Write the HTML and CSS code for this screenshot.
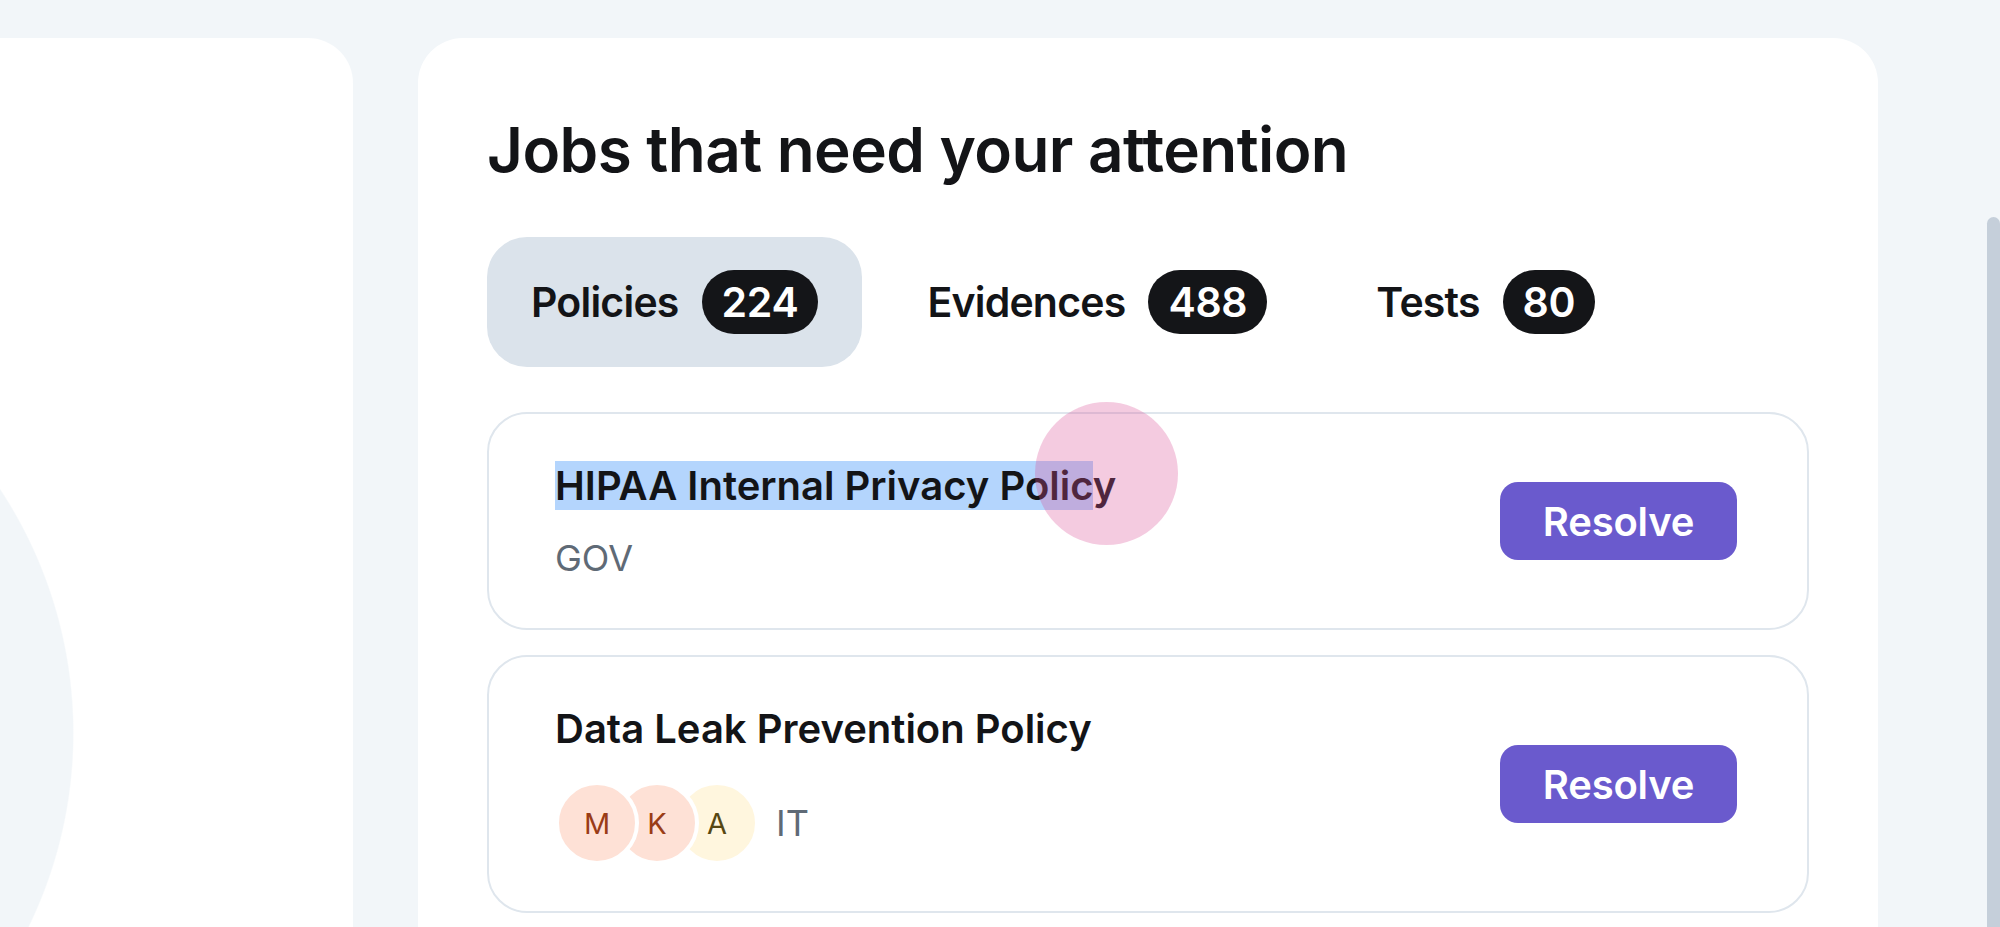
FILE: index.html
```html
<!DOCTYPE html>
<html lang="en">
<head>
<meta charset="utf-8">
<title>Jobs that need your attention</title>
<link rel="stylesheet" href="styles.css">
</head>
<body>
<div class="page">
  <aside class="side-card"></aside>
  <main class="main-card">
    <h1 class="title">Jobs that need your attention</h1>
    <nav class="tabs">
      <div class="tab active"><span class="tab-label">Policies</span><span class="badge">224</span></div>
      <div class="tab"><span class="tab-label">Evidences</span><span class="badge">488</span></div>
      <div class="tab"><span class="tab-label">Tests</span><span class="badge">80</span></div>
    </nav>
    <section class="jobs">
      <article class="job">
        <div class="job-info">
          <div class="job-title"><span class="selected">HIPAA Internal Privacy Polic</span>y</div>
          <div class="meta"><span class="dept">GOV</span></div>
        </div>
        <button class="resolve">Resolve</button>
        <span class="cursor-dot"></span>
      </article>
      <article class="job">
        <div class="job-info">
          <div class="job-title">Data Leak Prevention Policy</div>
          <div class="meta with-avatars">
            <div class="avatars">
              <span class="avatar peach z3">M</span>
              <span class="avatar peach z2">K</span>
              <span class="avatar cream z1">A</span>
            </div>
            <span class="dept">IT</span>
          </div>
        </div>
        <button class="resolve">Resolve</button>
      </article>
    </section>
  </main>
  <div class="scroll-thumb"></div>
</div>
</body>
</html>
```

FILE: styles.css
```css
* { box-sizing: border-box; }

html, body {
  margin: 0;
  padding: 0;
  height: 927px;
  overflow: hidden;
  background: #f2f6f9;
  font-family: Inter, "Noto Sans", sans-serif;
  color: #131417;
}

.page {
  display: flex;
  align-items: flex-start;
  height: 927px;
  padding-top: 38px;
  overflow: hidden;
}

.side-card {
  flex: none;
  width: 453px;
  height: 1000px;
  margin-left: -100px;
  border-radius: 45px;
  background: radial-gradient(circle 443px at -269px 695px, #f2f6f9 99.7%, #ffffff 100%);
}

.main-card {
  flex: none;
  width: 1460px;
  height: 1000px;
  margin-left: 65px;
  padding: 74px 69px 0;
  border-radius: 45px;
  background: #ffffff;
}

.title {
  margin: 0;
  font-size: 62px;
  line-height: 76px;
  font-weight: 600;
  letter-spacing: -0.55px;
}

.tabs {
  display: flex;
  gap: 21px;
  margin-top: 49px;
}

.tab {
  display: flex;
  align-items: center;
  gap: 23px;
  height: 130px;
  padding: 0 44px 0 44px;
  border-radius: 40px;
}

.tab.active { background: #dbe3eb; }

.tab-label {
  font-size: 41px;
  font-weight: 600;
  letter-spacing: -0.8px;
}

.badge {
  display: inline-flex;
  align-items: center;
  justify-content: center;
  height: 64px;
  padding: 0 20px;
  border-radius: 32px;
  background: #141518;
  color: #ffffff;
  font-size: 41px;
  font-weight: 600;
  letter-spacing: -0.3px;
}

.jobs {
  display: flex;
  flex-direction: column;
  gap: 25px;
  margin-top: 45px;
}

.job {
  position: relative;
  display: flex;
  align-items: center;
  justify-content: space-between;
  padding: 43px 70px 43px 66px;
  border: 2px solid #dfe6ed;
  border-radius: 40px;
}

.job-title {
  font-size: 40px;
  line-height: 57px;
  font-weight: 600;
  letter-spacing: 0;
}

.selected { background: #b4d5fd; }

.meta {
  display: flex;
  align-items: center;
  margin-top: 17px;
}

.meta.with-avatars { margin-top: 24px; margin-bottom: 3px; }

.dept {
  font-size: 36px;
  line-height: 54px;
  font-weight: 400;
  color: #5f6a76;
}

.avatars {
  display: flex;
  margin-right: 17px;
}

.avatar {
  position: relative;
  display: flex;
  align-items: center;
  justify-content: center;
  width: 84px;
  height: 84px;
  border: 4px solid #ffffff;
  border-radius: 50%;
  font-size: 29px;
  font-weight: 400;
}

.avatar + .avatar { margin-left: -24px; }

.avatar.peach { background: #fee1d6; color: #9a3c17; }
.avatar.cream { background: #fff6de; color: #574812; }

.z3 { z-index: 3; }
.z2 { z-index: 2; }
.z1 { z-index: 1; }

.resolve {
  flex: none;
  width: 237px;
  height: 78px;
  border: none;
  border-radius: 18px;
  background: #6a5acd;
  color: #ffffff;
  font-family: Inter, "Noto Sans", sans-serif;
  font-size: 40px;
  font-weight: 600;
  letter-spacing: -0.2px;
}

.cursor-dot {
  position: absolute;
  left: 546px;
  top: -12px;
  width: 143px;
  height: 143px;
  border-radius: 50%;
  background: rgba(218, 82, 152, 0.3);
  pointer-events: none;
}

.scroll-thumb {
  flex: none;
  width: 13px;
  height: 800px;
  margin-left: auto;
  margin-top: 179px;
  border-radius: 7px 7px 0 0;
  background: #c5cfda;
}
```
